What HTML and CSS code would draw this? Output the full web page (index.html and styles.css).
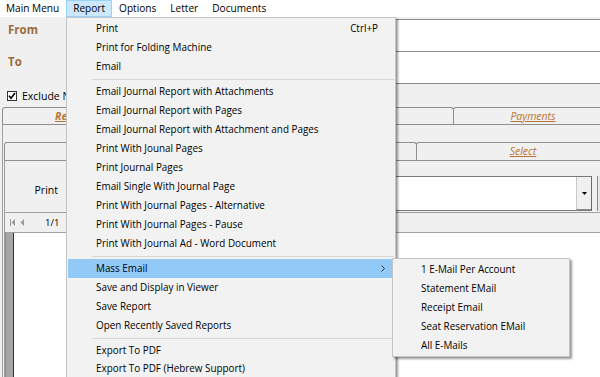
FILE: index.html
```html
<!DOCTYPE html>
<html>
<head>
<meta charset="utf-8">
<link rel="stylesheet" href="styles.css">
</head>
<body>
<div class="menubar">
  <span class="mb-item">Main Menu</span>
  <span class="mb-item active">Report</span>
  <span class="mb-item">Options</span>
  <span class="mb-item">Letter</span>
  <span class="mb-item">Documents</span>
</div>

<div class="fields">
  <div class="field f-from"><span class="lbl">From</span><div class="box"></div></div>
  <div class="field f-to"><span class="lbl">To</span><div class="box"></div></div>
</div>

<div class="check-row">
  <span class="cb"><svg width="8" height="8" viewBox="0 0 8 8"><path d="M1 3.8 L3 6.2 L7 1" fill="none" stroke="#000" stroke-width="1.6"/></svg></span>
  <span class="cb-text">Exclude Non Members</span>
</div>

<div class="tabctl">
  <div class="tabrow outer">
    <span class="tab w1 sel"><span class="tl-clip">Receipts</span></span>
    <span class="tab w2"></span>
    <span class="tab w3">Pledges</span>
    <span class="tab w4">Payments</span>
  </div>
  <div class="tabpage">
    <div class="tabrow inner">
      <span class="tab iw1"></span>
      <span class="tab iw2"></span>
      <span class="tab iw3">Select</span>
    </div>
    <div class="innerpage">
      <div class="toolbar">
        <div class="print">Print</div>
        <div class="combo">
          <div class="combo-btn"><svg width="5" height="3" viewBox="0 0 5 3"><path d="M0 0 H5 L2.5 3 Z" fill="#000"/></svg></div>
        </div>
        <div class="edge"></div>
      </div>
      <div class="viewer">
        <div class="vtool">
          <svg class="nav" width="15" height="7" viewBox="0 0 15 7"><rect x="0" y="0" width="1" height="7" fill="#9a9a9a"/><path d="M5 0 L1.5 3.5 L5 7 Z" fill="#9a9a9a"/><path d="M14 0 L10.5 3.5 L14 7 Z" fill="#9a9a9a"/></svg>
          <span class="pg">1/1</span>
        </div>
        <div class="vbody"><div class="vpage"></div></div>
      </div>
    </div>
  </div>
</div>

<div class="menu">
  <div class="mi"><span>Print</span><span>Ctrl+P</span></div>
  <div class="mi"><span>Print for Folding Machine</span></div>
  <div class="mi"><span>Email</span></div>
  <div class="sep"></div>
  <div class="mi"><span>Email Journal Report with Attachments</span></div>
  <div class="mi"><span>Email Journal Report with Pages</span></div>
  <div class="mi"><span>Email Journal Report with Attachment and Pages</span></div>
  <div class="mi"><span>Print With Jounal Pages</span></div>
  <div class="mi"><span>Print Journal Pages</span></div>
  <div class="mi"><span>Email Single With Journal Page</span></div>
  <div class="mi"><span>Print With Journal Pages - Alternative</span></div>
  <div class="mi"><span>Print With Journal Pages - Pause</span></div>
  <div class="mi"><span>Print With Journal Ad - Word Document</span></div>
  <div class="sep"></div>
  <div class="mi hl"><span>Mass Email</span><svg class="arrow" width="4" height="7" viewBox="0 0 4 7"><path d="M0.5 0.5 L3.5 3.5 L0.5 6.5" fill="none" stroke="#333" stroke-width="1"/></svg></div>
  <div class="mi"><span>Save and Display in Viewer</span></div>
  <div class="mi"><span>Save Report</span></div>
  <div class="mi"><span>Open Recently Saved Reports</span></div>
  <div class="sep"></div>
  <div class="mi"><span>Export To PDF</span></div>
  <div class="mi last"><span>Export To PDF (Hebrew Support)</span></div>
</div>

<div class="submenu">
  <div class="mi"><span>1 E-Mail Per Account</span></div>
  <div class="mi"><span>Statement EMail</span></div>
  <div class="mi"><span>Receipt Email</span></div>
  <div class="mi"><span>Seat Reservation EMail</span></div>
  <div class="mi"><span>All E-Mails</span></div>
</div>
</body>
</html>
```

FILE: styles.css
```css
* { box-sizing: border-box; }
html, body { margin: 0; }
body {
  width: 600px;
  height: 377px;
  overflow: hidden;
  position: relative;
  background: #f0f0f0;
  font-family: "Open Sans", "Noto Sans", sans-serif;
  font-size: 9.9px;
  color: #000;
}

/* menu bar */
.menubar {
  display: flex;
  height: 17px;
  background: #fff;
}
.mb-item {
  padding: 0 6px;
  border: 1px solid transparent;
  line-height: 15px;
  font-size: 10.1px;
  white-space: nowrap;
}
.mb-item:first-child { padding-left: 5px; }
.mb-item.active {
  background: #cce8ff;
  border-color: #99d1ff;
}

/* fields */
.fields { padding-top: 2px; }
.field { display: flex; }
.f-from { height: 33px; }
.f-to { height: 32px; }
.lbl {
  width: 90px;
  padding-left: 8px;
  font-weight: 700;
  font-size: 11.5px;
  line-height: 14px;
  color: #9c6b3b;
}
.f-from .lbl { padding-top: 4px; }
.f-to .lbl { padding-top: 3px; }
.box {
  flex: 1;
  background: #fff;
  border-top: 1px solid #8c8c8c;
  border-bottom: 1px solid #8c8c8c;
  border-left: 1px solid #8c8c8c;
}
.f-to .box { border-top: none; }

.check-row {
  height: 23px;
  display: flex;
  align-items: flex-start;
  padding: 7px 0 0 7px;
  gap: 5px;
}
.cb {
  width: 10px;
  height: 10px;
  border: 1px solid #333;
  background: #fff;
  display: flex;
  align-items: center;
  justify-content: center;
}
.cb-text {
  width: 44px;
  overflow: hidden;
  white-space: nowrap;
  line-height: 11px;
  font-size: 10.5px;
}

/* tabs */
.tabctl { margin-left: 2px; }
.tabrow { display: flex; }
.tabrow.outer { height: 17px; }
.tabrow.inner { height: 18px; }
.tab {
  flex: none;
  border: 1px solid #8f8f8f;
  border-bottom: none;
  border-radius: 3px 3px 0 0;
  margin-right: -1px;
  text-align: center;
  line-height: 16px;
  font-style: italic;
  font-size: 10.5px;
  color: #b97434;
  text-decoration: underline;
  background: #f0f0f0;
}
.tab.sel { font-weight: 700; text-align: left; padding-left: 52px; }
.tl-clip {
  display: inline-block;
  width: 12px;
  overflow: hidden;
  white-space: nowrap;
  vertical-align: top;
  text-decoration: underline;
}
.w1 { width: 151px; }
.w2 { width: 152px; }
.w3 { width: 151px; }
.w4 { width: 160px; }
.iw1 { width: 207px; }
.iw2 { width: 207px; }
.iw3 { width: 214px; }
.inner .tab { line-height: 17px; }

.tabpage {
  border-top: 1px solid #8f8f8f;
  border-left: 1px solid #a0a0a0;
  padding: 17px 0 0 1px;
}
.innerpage {
  border-top: 1px solid #8f8f8f;
  border-left: 1px solid #a0a0a0;
}

.toolbar {
  display: flex;
  height: 51px;
}
.print {
  width: 61px;
  text-align: right;
  padding: 23px 8px 0 0;
  line-height: 12px;
  font-size: 10.5px;
}
.combo {
  flex: 1;
  margin-top: 15px;
  height: 35px;
  background: #fff;
  border: 1px solid #7a7a7a;
  border-right: 1px solid #6a6a6a;
  display: flex;
  justify-content: flex-end;
}
.combo-btn {
  width: 15px;
  height: 100%;
  background: #f0f0f0;
  border-left: 1px solid #c8c8c8;
  border-bottom: 1px solid #888;
  display: flex;
  align-items: center;
  justify-content: center;
}
.edge {
  width: 3px;
  margin-left: 5px;
  margin-top: 15px;
  height: 35px;
  border-left: 1px solid #888;
  background: #e6e6e6;
}

.vtool {
  height: 21px;
  border-top: 1px solid #a0a0a0;
  border-bottom: 1px solid #a0a0a0;
  display: flex;
  align-items: center;
  padding-left: 5px;
}
.pg { margin-left: 20px; font-size: 9.5px; }
.vbody {
  height: 150px;
  border-left: 1px solid #8a8a8a;
  padding-left: 1px;
  background: #a6a6a6;
  display: flex;
}
.vpage {
  margin-left: 6px;
  flex: 1;
  border-left: 1px solid #333;
  background: #fff;
}

/* dropdown menus */
.menu, .submenu {
  position: absolute;
  border: 1px solid #c4c4c4;
  background: #f2f2f2;
  padding: 1px;
  box-shadow: 2px 2px 2px rgba(0, 0, 0, 0.4);
}
.menu { left: 66px; top: 17px; width: 330px; }
.submenu { left: 392px; top: 258px; width: 178px; }
.mi {
  height: 19px;
  line-height: 19px;
  padding: 0 16px 0 28px;
  display: flex;
  justify-content: space-between;
  align-items: center;
  position: relative;
  white-space: nowrap;
}
.menu .mi.last { height: 17px; line-height: 17px; }
.submenu .mi { padding-left: 27px; }
.mi.hl { background: #91c9f7; }
.arrow { position: absolute; right: 9px; top: 6px; }
.sep {
  height: 6px;
  display: flex;
  align-items: center;
  padding-left: 24px;
}
.sep::after {
  content: "";
  flex: 1;
  height: 1px;
  background: #d7d7d7;
}
```
